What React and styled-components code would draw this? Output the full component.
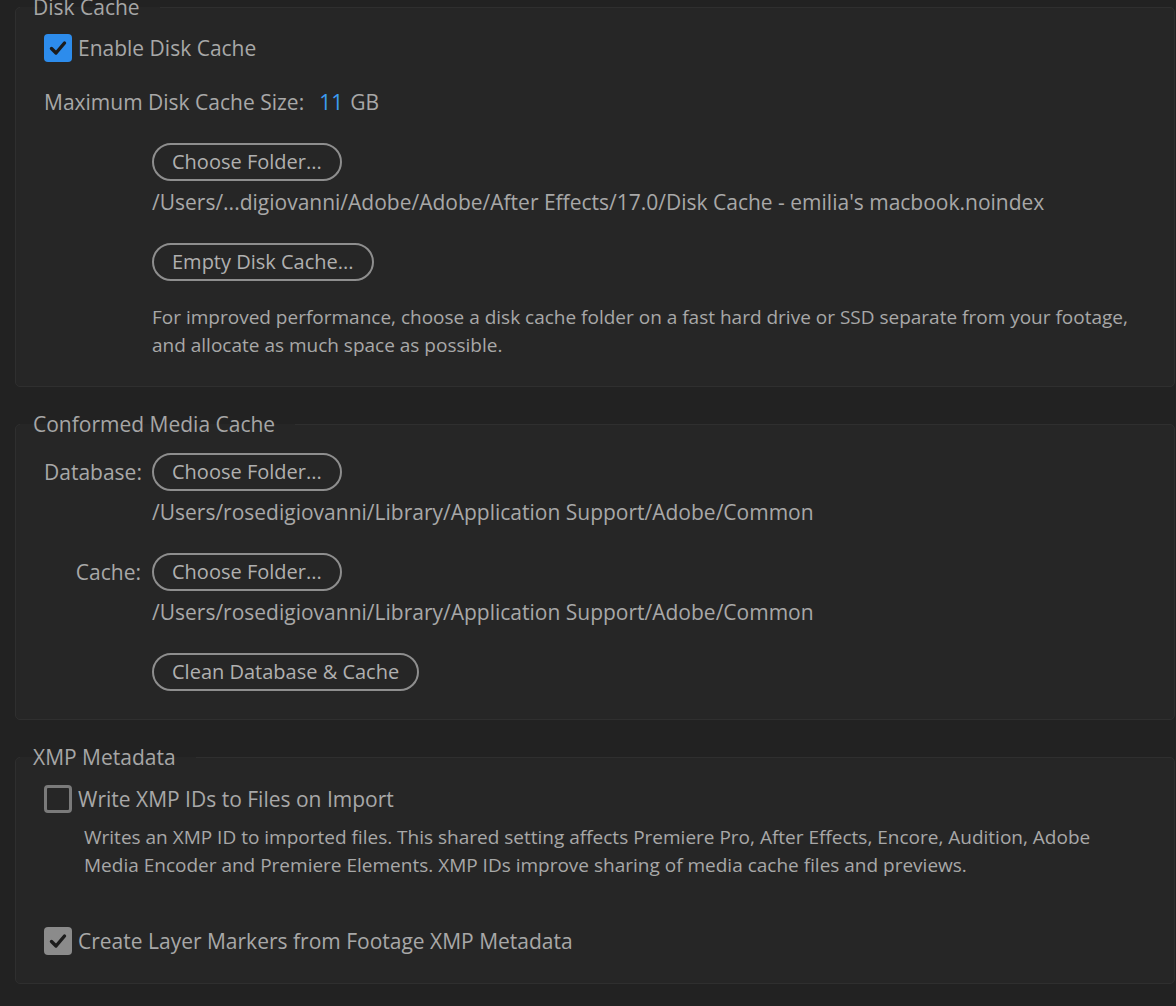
import React from "react";
import styled, { createGlobalStyle } from "styled-components";

const Global = createGlobalStyle`
  html, body { margin: 0; padding: 0; background: #222222; }
  body { font-family: "Open Sans", "Lato", sans-serif; color: #a8a8a8; overflow: hidden; }
`;

const Page = styled.div`
  width: 1176px;
  height: 1006px;
  background: #222222;
  overflow: hidden;
`;

const Inner = styled.div`
  display: flex;
  flex-direction: column;
  gap: ${(p) => p.$gap}px;
  margin-top: -7px;
  padding: 0 1px 0 15px;
`;

const Group = styled.fieldset`
  margin: 0;
  padding: ${(p) => p.$pt}px 0 ${(p) => p.$pb}px 28px;
  border: 1px solid #2f2f2f;
  border-radius: 5px;
  background: #262626;
  min-width: 0;
  display: flex;
  flex-direction: column;
`;

const Legend = styled.legend`
  margin-left: -24px;
  padding: 0 20px 0 13px;
  font-size: 21px;
  line-height: 28px;
  color: #a6a6a6;
`;

const Row = styled.div`
  display: flex;
  align-items: center;
  gap: ${(p) => p.$gap ?? 6}px;
  margin-top: ${(p) => p.$mt ?? 0}px;
  font-size: 21px;
  line-height: 28px;
`;

const Grid = styled.div`
  display: grid;
  grid-template-columns: 108px auto;
  align-items: center;
  margin-top: ${(p) => p.$mt ?? 0}px;
`;

const Label = styled.span`
  font-size: 21px;
  line-height: 28px;
  text-align: right;
  padding-right: 11px;
  margin-top: ${(p) => p.$mt ?? 0}px;
`;

const Text = styled.div`
  grid-column: 2;
  font-size: ${(p) => p.$size ?? 21}px;
  line-height: 28px;
  margin-top: ${(p) => p.$mt ?? 0}px;
  white-space: ${(p) => (p.$wrap ? "normal" : "nowrap")};
  max-width: ${(p) => p.$max ?? "none"};
`;

const Button = styled.button`
  grid-column: 2;
  justify-self: start;
  height: 38px;
  padding: 0 18px;
  border: 2px solid #8e8e8e;
  border-radius: 19px;
  background: transparent;
  color: #b0b0b0;
  font-family: inherit;
  font-size: 20px;
  line-height: 34px;
  margin-top: ${(p) => p.$mt ?? 0}px;
  cursor: pointer;
`;

const Box = styled.span`
  width: 28px;
  height: 28px;
  box-sizing: border-box;
  border-radius: 4px;
  flex: none;
  display: flex;
  align-items: center;
  justify-content: center;
  background: ${(p) => (p.$variant === "blue" ? "#2d8cec" : p.$variant === "gray" ? "#8b8b8b" : "transparent")};
  border: ${(p) => (p.$variant === "empty" ? "3px solid #7a7a7a" : "none")};
`;

const Value = styled.span`
  color: #3c9cf2;
  margin-left: 15px;
  margin-right: 7px;
`;

const Desc = styled.div`
  font-size: 19px;
  line-height: 28px;
  margin-top: 10px;
  padding-left: 40px;
  max-width: 1030px;
`;

const Check = () => (
  <svg width="20" height="20" viewBox="0 0 20 20" fill="none">
    <path d="M3.5 10.5 L8 15 L16.5 5" stroke="#1c1c1c" strokeWidth="3.4" strokeLinecap="round" strokeLinejoin="round" />
  </svg>
);

const Checkbox = ({ variant }) => <Box $variant={variant}>{variant !== "empty" && <Check />}</Box>;

export default function App() {
  return (
    <Page>
      <Global />
      <Inner $gap={23}>
        <Group $pt={13} $pb={27}>
          <Legend>Disk Cache</Legend>
          <Row>
            <Checkbox variant="blue" />
            <span>Enable Disk Cache</span>
          </Row>
          <Row $mt={26} $gap={0}>
            <span>Maximum Disk Cache Size:</span>
            <Value>11</Value>
            <span>GB</span>
          </Row>
          <Grid $mt={27}>
            <Button>Choose Folder...</Button>
            <Text $mt={7}>/Users/...digiovanni/Adobe/Adobe/After Effects/17.0/Disk Cache - emilia's macbook.noindex</Text>
            <Button $mt={27}>Empty Disk Cache...</Button>
            <Text $mt={22} $size={19} $wrap $max="1000px">
              For improved performance, choose a disk cache folder on a fast hard drive or SSD separate from your footage, and allocate as much space as possible.
            </Text>
          </Grid>
        </Group>

        <Group $pt={15} $pb={28}>
          <Legend>Conformed Media Cache</Legend>
          <Grid>
            <Label>Database:</Label>
            <Button>Choose Folder...</Button>
            <Text $mt={7}>/Users/rosedigiovanni/Library/Application Support/Adobe/Common</Text>
            <Label $mt={27}>Cache:</Label>
            <Button $mt={27}>Choose Folder...</Button>
            <Text $mt={7}>/Users/rosedigiovanni/Library/Application Support/Adobe/Common</Text>
            <Button $mt={27}>Clean Database &amp; Cache</Button>
          </Grid>
        </Group>

        <Group $pt={14} $pb={28}>
          <Legend>XMP Metadata</Legend>
          <Row>
            <Checkbox variant="empty" />
            <span>Write XMP IDs to Files on Import</span>
          </Row>
          <Desc>
            Writes an XMP ID to imported files. This shared setting affects Premiere Pro, After Effects, Encore, Audition, Adobe Media Encoder and Premiere Elements. XMP IDs improve sharing of media cache files and previews.
          </Desc>
          <Row $mt={48}>
            <Checkbox variant="gray" />
            <span>Create Layer Markers from Footage XMP Metadata</span>
          </Row>
        </Group>
      </Inner>
    </Page>
  );
}
